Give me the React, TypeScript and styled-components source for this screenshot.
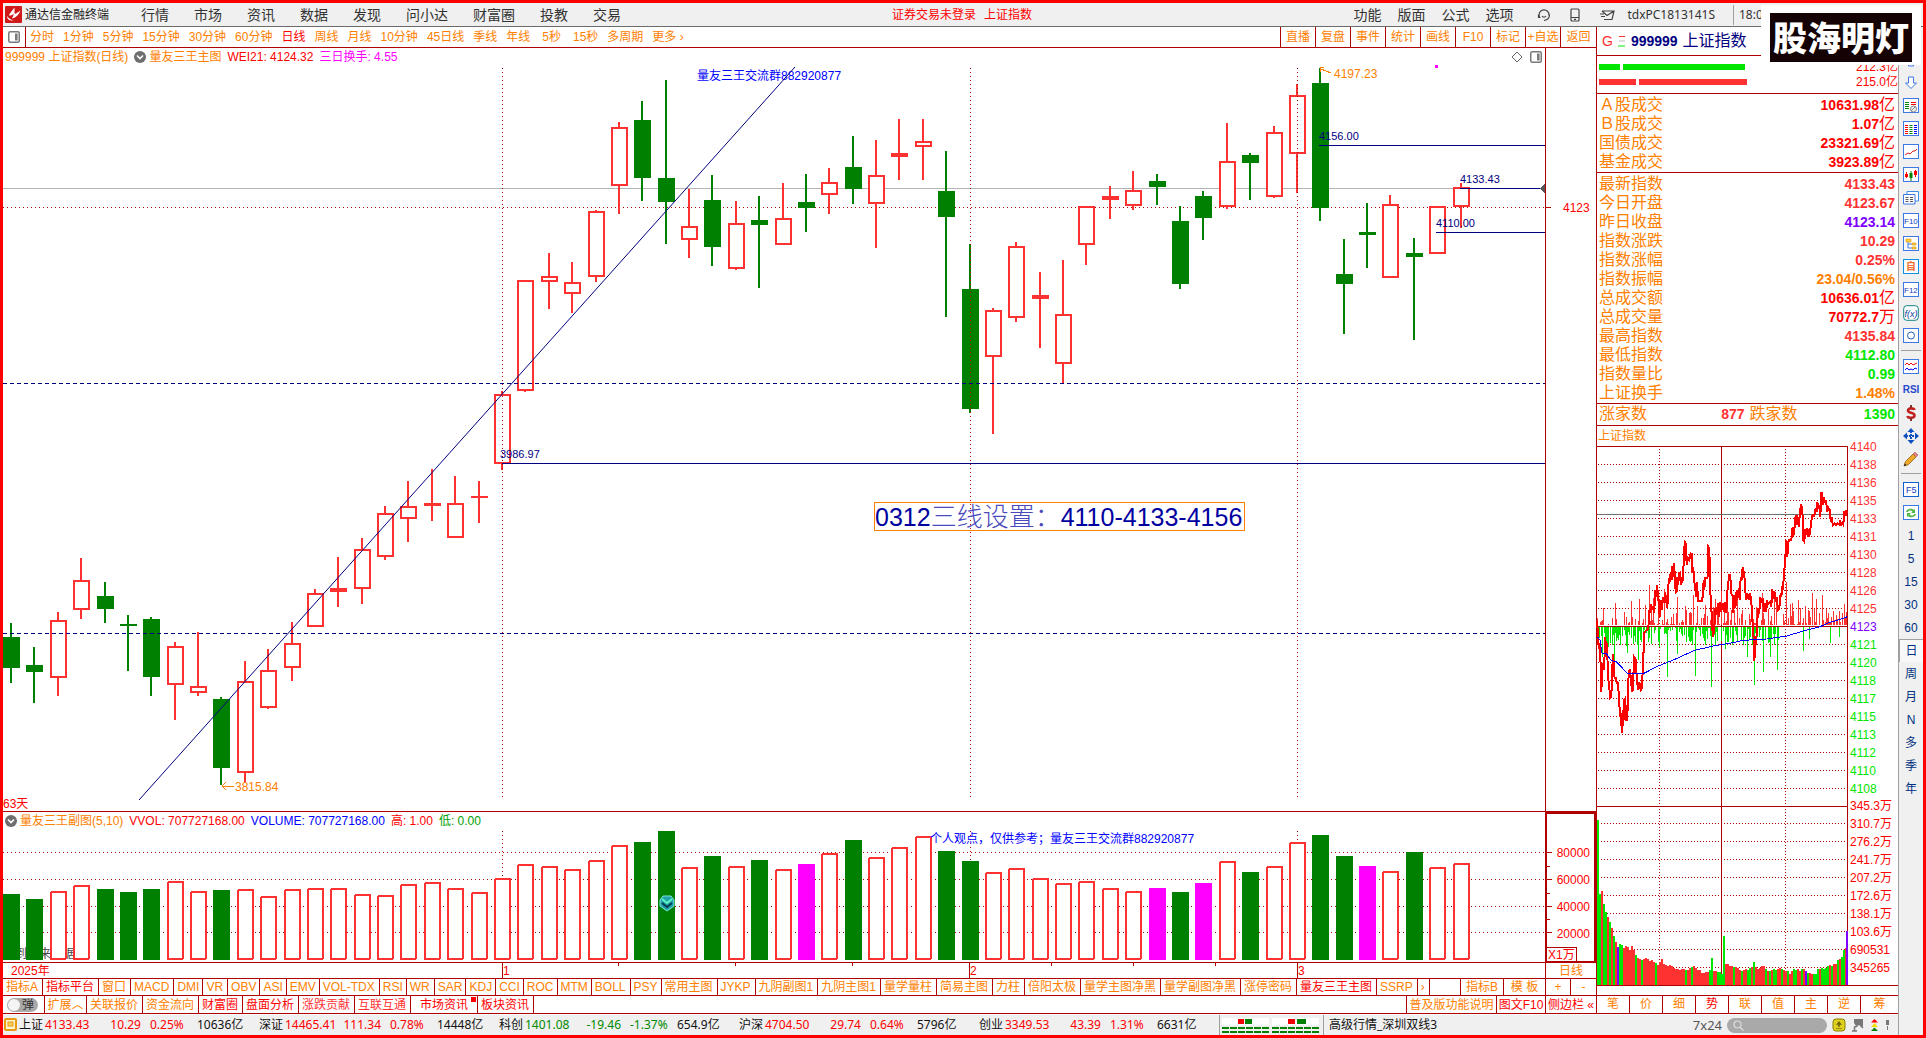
import React from "react";
import styled, { createGlobalStyle, css } from "styled-components";

const C = {
  frame: "#ff0000",
  line: "#b00000",
  orange: "#ff8000",
  red: "#ff0000",
  up: "#ff3232",
  down: "#008000",
  lime: "#00e600",
  purple: "#8000ff",
  navy: "#000080",
  blue: "#0000ff",
  magenta: "#ff00ff",
  bar: "#f0f0f0",
};
const SANS = `"Liberation Sans", "Noto Sans CJK SC", sans-serif`;
const UI = `"Noto Sans", "Noto Sans CJK SC", sans-serif`;

const Global = createGlobalStyle`
  * { box-sizing: border-box; }
  body { margin: 0; background: #fff; font: 12px/16px ${SANS}; }
  button { margin: 0; padding: 0; border: 0; background: none; font: inherit; color: inherit; white-space: nowrap; cursor: pointer; }
  svg { display: block; }
  svg text { font-family: ${SANS}; font-size: 12px; }
`;

const Frame = styled.div`
  display: flex;
  flex-direction: column;
  height: 100vh;
  min-height: 800px;
  border: 3px solid ${C.frame};
  overflow: hidden;
`;

/* ---------- top menu ---------- */
const MenuBar = styled.header`
  position: relative;
  display: flex;
  align-items: center;
  flex: none;
  height: 24px;
  padding-left: 2px;
  background: ${C.bar};
  border-bottom: 1px solid #6b6b6b;
  color: #333;
  font-family: ${UI};
`;
const AppTitle = styled.h1`
  margin: 0 32px 0 3px;
  width: 84px;
  font: 12px/22px ${UI};
  color: #222;
  white-space: nowrap;
`;
const MenuGroup = styled.nav<{ $gap: number }>`
  display: flex;
  gap: ${(p) => p.$gap}px;
  font-size: 14px;
  line-height: 22px;
`;
const LoginNote = styled.div`
  display: flex;
  gap: 8px;
  margin-left: 271px;
  color: ${C.red};
`;
const MenuRight = styled.div`
  display: flex;
  align-items: center;
  margin-left: auto;
`;
const MenuIcons = styled.div`
  display: flex;
  align-items: center;
  gap: 18px;
  margin: 0 12px 0 24px;
`;
const Clock = styled.div`
  width: 190px;
  margin-left: 18px;
  padding-left: 5px;
  border-left: 1px solid #a0a0a0;
  line-height: 20px;
`;
const Brand = styled.div`
  position: absolute;
  top: 2px;
  right: 2px;
  z-index: 5;
  padding: 8px 9px 3px;
  background: #fff;
`;
const BrandText = styled.div`
  width: 142px;
  height: 49px;
  background: #140204;
  color: #fff;
  font: 900 34px/48px "Noto Sans CJK SC", sans-serif;
  text-align: center;
  white-space: nowrap;
`;

/* ---------- shell ---------- */
const Body = styled.div`
  display: flex;
  flex: 1;
  min-height: 0;
`;
const Main = styled.div`
  display: flex;
  flex-direction: column;
  flex: 1;
  min-width: 0;
`;
const Work = styled.div`
  display: flex;
  flex: 1;
  min-height: 0;
`;
const Left = styled.main`
  display: flex;
  flex-direction: column;
  flex: 1;
  min-width: 0;
`;

const PeriodBar = styled.div`
  display: flex;
  flex: none;
  height: 21px;
  border-bottom: 1px solid ${C.line};
  color: ${C.orange};
`;
const PanelToggle = styled.button`
  display: flex;
  align-items: center;
  width: 23px;
  padding-left: 5px;
  border-right: 1px solid ${C.line};
`;
const Periods = styled.div`
  display: flex;
  align-items: center;
  gap: 9px;
  padding-left: 4px;
`;
const Period = styled.button<{ $on?: boolean; $inset?: boolean }>`
  line-height: 18px;
  ${(p) => p.$on && css`color: ${C.red};`}
  ${(p) => p.$inset && css`padding-left: 3px;`}
`;
const Tools = styled.div`
  display: flex;
  margin-left: auto;
`;
const Tool = styled.button`
  width: 35px;
  border-left: 1px solid ${C.line};
  line-height: 18px;
  &:last-child { width: 36px; }
`;

const Pane = styled.section<{ $h?: number }>`
  display: flex;
  ${(p) => (p.$h ? css`flex: none; height: ${p.$h}px;` : css`flex: 1; min-height: 0;`)}
  border-bottom: 1px solid ${C.line};
`;
const Plot = styled.div`
  display: flex;
  flex-direction: column;
  flex: 1;
  min-width: 0;
`;
const Info = styled.div<{ $h: number }>`
  display: flex;
  flex: none;
  align-items: center;
  gap: 6px;
  height: ${(p) => p.$h}px;
  padding: 0 3px 0 2px;
  white-space: nowrap;
  > svg { margin-right: -3px; }
`;
const InfoTools = styled.div`
  display: flex;
  gap: 7px;
  margin-left: auto;
`;
const Ink = styled.span<{ $c: string }>`
  color: ${(p) => p.$c};
`;
const Canvas = styled.svg`
  flex: 1;
  width: 100%;
  min-width: 0;
  min-height: 0;
  overflow: visible;
`;
const Axis = styled.div<{ $box?: boolean }>`
  display: flex;
  flex: none;
  width: 51px;
  border-left: 1px solid ${C.line};
  ${(p) => p.$box && css`border: 2px solid ${C.line}; border-bottom-width: 1px;`}
`;
const DateRow = styled.div`
  display: flex;
  flex: none;
  height: 16px;
  border-bottom: 1px solid ${C.line};
`;
const DateCell = styled.button`
  flex: none;
  width: 51px;
  border-left: 1px solid ${C.line};
  color: ${C.orange};
  line-height: 14px;
`;

const TabRow = styled.div<{ $h: number }>`
  display: flex;
  flex: none;
  height: ${(p) => p.$h}px;
  border-bottom: 1px solid ${C.line};
  overflow: hidden;
`;
const Tab = styled.button<{ $c?: string; $w?: number; $wide?: boolean; $tight?: boolean }>`
  position: relative;
  flex: none;
  padding: ${(p) => (p.$wide ? "0 9px" : p.$tight ? "0 3px" : "0 4px 0 3px")};
  ${(p) => p.$w && css`width: ${p.$w}px; padding: 0;`}
  border-right: 1px solid ${C.line};
  color: ${(p) => p.$c || C.orange};
  line-height: 16px;
  &:last-child { border-right: 0; }
`;
const Spacer = styled.div`
  flex: 1;
  border-right: 1px solid ${C.line};
`;
const NewMark = styled.i`
  position: absolute;
  top: 1px;
  right: 1px;
  width: 5px;
  height: 5px;
  background: ${C.red};
`;
const Switch = styled.label`
  display: flex;
  align-items: center;
  flex: none;
  width: 42px;
  padding-left: 4px;
  border-right: 1px solid ${C.line};
`;
const SwitchBox = styled.input`
  position: absolute;
  opacity: 0;
`;
const SwitchPill = styled.span`
  display: flex;
  align-items: center;
  justify-content: space-between;
  width: 31px;
  height: 14px;
  padding: 0 4px 0 1px;
  border-radius: 7px;
  background: #a9a9a9;
  color: #333;
  line-height: 14px;
  &::before {
    content: "";
    width: 12px;
    height: 12px;
    border-radius: 50%;
    background: #f4f4f4;
  }
`;

/* ---------- status bar ---------- */
const StatusBar = styled.footer`
  display: flex;
  align-items: center;
  flex: none;
  height: 21px;
  padding-left: 1px;
  background: ${C.bar};
  border-top: 1px solid #fafafa;
  font-family: ${UI};
  color: #111;
  white-space: nowrap;
`;
const Quote = styled.div<{ $c: string }>`
  display: grid;
  flex: none;
  grid-template-columns: 26px 54px 42px 47px 71px;
  color: ${(p) => p.$c};
  line-height: 20px;
`;
const QuoteText = styled.span<{ $indent?: boolean; $end?: boolean; $dark?: boolean }>`
  ${(p) => p.$end && css`text-align: right;`}
  ${(p) => p.$indent && css`padding-left: 9px;`}
  ${(p) => p.$dark && css`color: #111;`}
`;
const Server = styled.div`
  display: flex;
  align-items: center;
  gap: 5px;
  height: 20px;
`;
const Blocks = styled.div`
  padding: 0 2px;
  border: solid #a0a0a0;
  border-width: 0 1px;
`;
const StatusRight = styled.div`
  display: flex;
  align-items: center;
  gap: 5px;
  margin-left: auto;
  padding-right: 7px;
  font-size: 13px;
  color: #555;
`;
const Search = styled.label`
  display: flex;
  align-items: center;
  width: 100px;
  height: 15px;
  padding-left: 6px;
  border-radius: 8px;
  background: #a9a9a9;
  input { width: 76px; height: 13px; border: 0; padding: 0; background: none; outline: none; }
`;

/* ---------- right quote panel ---------- */
const Panel = styled.aside`
  display: flex;
  flex-direction: column;
  flex: none;
  width: 302px;
  border-left: 1px solid ${C.line};
`;
const PanelHead = styled.h2`
  display: flex;
  align-items: center;
  flex: none;
  gap: 5px;
  height: 29px;
  margin: 0;
  padding-left: 5px;
  border-bottom: 1px solid ${C.line};
  font: 16px/26px ${SANS};
  color: ${C.navy};
  b { font-size: 14px; }
  i { font-style: normal; color: ${C.up}; font-size: 14px; }
`;
const Flow = styled.div`
  flex: none;
  height: 38px;
  padding: 3px 0 0 2px;
  border-bottom: 1px solid ${C.line};
`;
const FlowRow = styled.div<{ $c: string }>`
  display: flex;
  align-items: center;
  gap: 3px;
  height: 15px;
  color: ${C.red};
  i { height: 6px; background: ${(p) => p.$c}; }
  span { margin-left: auto; }
`;
const Stats = styled.table`
  flex: none;
  width: 100%;
  border-spacing: 0;
  padding: 1px 3px 1px 2px;
  border-bottom: 1px solid ${C.line};
  tr { height: 19px; }
  th, td { height: 19px; padding: 0; line-height: 16px; font-size: 16px; vertical-align: middle; }
  th { font-weight: 400; text-align: left; color: ${C.orange}; }
  td { text-align: right; }
  b { font-size: 14px; line-height: 14px; }
`;
const Breadth = styled.div`
  display: grid;
  grid-template-columns: 1fr 1fr;
  flex: none;
  height: 22px;
  gap: 5px;
  padding: 0 3px 0 2px;
  border-bottom: 1px solid ${C.line};
  font-size: 16px;
  line-height: 20px;
  color: ${C.orange};
  div { display: flex; justify-content: space-between; }
  b { font-size: 14px; }
`;
const MiniTitle = styled.div`
  flex: none;
  height: 20px;
  padding-left: 1px;
  color: ${C.orange};
  line-height: 20px;
`;
const MiniTabs = styled.div`
  display: flex;
  flex: none;
  height: 19px;
  border: solid ${C.line};
  border-width: 1px 0;
`;
const MiniTab = styled.button<{ $on?: boolean }>`
  width: 33px;
  border-right: 1px solid ${C.line};
  color: ${(p) => (p.$on ? C.red : C.orange)};
  line-height: 17px;
  &:last-child { flex: 1; border-right: 0; }
`;

/* ---------- side tool strip ---------- */
const Strip = styled.nav`
  display: flex;
  flex-direction: column;
  flex: none;
  width: 25px;
  padding-top: 21px;
  background: ${C.bar};
  border-left: 1px solid #a0a0a0;
`;
const StripItem = styled.button<{ $on?: boolean; $small?: boolean }>`
  display: flex;
  align-items: center;
  justify-content: center;
  flex: none;
  height: 23px;
  color: #003080;
  ${(p) => p.$on && css`border: 1px solid #a0a0a0; border-width: 1px 0 0 1px; background: #f8f8f8;`}
  ${(p) => p.$small && css`font-weight: 700; font-size: 10px; color: #2848d0;`}
`;
const StripRule = styled.hr`
  flex: none;
  align-self: stretch;
  height: 1px;
  margin: 3px 2px 4px;
  border: 0;
  background: #a0a0a0;
`;

/* ---------- data ---------- */
// kind, high, body top, body bottom, low, volume top
type Candle = [string, number, number, number, number, number];
const candles: Candle[] = [
  ["g", 623, 637, 668, 683, 894], ["g", 647, 665, 672, 703, 899], ["r", 612, 620, 678, 696, 891],
  ["r", 558, 580, 610, 619, 885], ["g", 582, 596, 609, 623, 889], ["g", 615, 624, 626, 671, 892],
  ["g", 617, 619, 677, 696, 889], ["r", 642, 646, 685, 720, 881], ["r", 632, 686, 693, 696, 891],
  ["g", 697, 699, 768, 785, 890], ["r", 661, 681, 773, 783, 889], ["r", 649, 670, 708, 709, 896],
  ["r", 622, 643, 668, 681, 889], ["r", 589, 593, 627, 627, 888], ["r", 557, 588, 592, 607, 888],
  ["r", 538, 549, 589, 604, 894], ["r", 506, 513, 557, 560, 895], ["r", 481, 506, 519, 542, 884],
  ["r", 469, 503, 506, 521, 882], ["r", 476, 503, 538, 538, 888], ["r", 481, 496, 498, 523, 892],
  ["r", 391, 394, 464, 470, 878], ["r", 280, 280, 391, 392, 864], ["r", 253, 276, 282, 309, 866],
  ["r", 262, 282, 294, 313, 869], ["r", 210, 211, 277, 282, 860], ["r", 122, 127, 186, 214, 845],
  ["g", 101, 120, 178, 201, 842], ["g", 80, 178, 202, 244, 831], ["r", 189, 226, 240, 258, 867],
  ["g", 175, 200, 247, 266, 856], ["r", 201, 223, 269, 270, 866], ["g", 196, 220, 225, 288, 860],
  ["r", 183, 218, 245, 245, 869], ["g", 174, 202, 208, 232, 864], ["r", 168, 182, 195, 214, 853],
  ["g", 136, 167, 189, 204, 840], ["r", 140, 175, 204, 248, 857], ["r", 119, 153, 157, 180, 847],
  ["r", 119, 141, 147, 180, 836], ["g", 151, 191, 217, 317, 851], ["g", 244, 289, 409, 413, 861],
  ["r", 308, 310, 357, 434, 872], ["r", 242, 246, 318, 322, 868], ["r", 272, 295, 299, 348, 878],
  ["r", 260, 314, 364, 383, 883], ["r", 206, 206, 245, 265, 881], ["r", 186, 196, 200, 219, 888],
  ["r", 171, 190, 206, 210, 891], ["g", 174, 181, 187, 205, 888], ["g", 206, 221, 284, 289, 892],
  ["g", 191, 196, 218, 240, 883], ["r", 123, 161, 207, 209, 861], ["g", 153, 155, 163, 200, 872],
  ["r", 126, 132, 197, 198, 866], ["r", 84, 95, 154, 193, 842], ["g", 68, 83, 208, 221, 835],
  ["g", 239, 274, 284, 334, 856], ["g", 203, 232, 235, 268, 866], ["r", 195, 204, 278, 278, 871],
  ["g", 238, 253, 257, 340, 852], ["r", 206, 206, 254, 254, 867], ["r", 183, 187, 207, 228, 863],
];
const magentaBars = new Set([34, 49, 51, 58]);
const cx = (i: number) => Math.round(11 + i * 23.38);
const monthLines = [502, 970, 1297];

const PriceChart = () => (
  <Canvas viewBox="3 66 1542 745" preserveAspectRatio="none" shapeRendering="crispEdges">
    <path d="M3 188.5H1545" stroke="#b4b4b4" />
    <path d="M3 207.5H1545" stroke={C.line} strokeDasharray="1 3" />
    <text x="697" y="80" fill={C.blue}>量友三王交流群882920877</text>
    {candles.map(([k, h, t, b, l], i) => {
      const x = cx(i);
      const c = k === "g" ? C.down : C.up;
      const solid = k === "g" || b - t < 5;
      return (
        <g key={i}>
          <rect x={x - 1} y={h} width="2" height={t - h} fill={c} />
          <rect x={x - 1} y={b} width="2" height={l - b} fill={c} />
          {solid ? (
            <rect x={x - 8} y={t} width="17" height={b - t} fill={c} />
          ) : (
            <rect x={x - 7} y={t + 1} width="15" height={b - t - 2} fill="#fff" stroke={c} strokeWidth="2" />
          )}
        </g>
      );
    })}
    {monthLines.map((x) => (
      <path key={x} d={`M${x + 0.5} 68V797`} stroke={C.line} strokeDasharray="1 3" />
    ))}
    <path d="M3 383.5H1545M3 633.5H1545" stroke={C.navy} strokeDasharray="4 3" />
    <path d="M139 800L795 67" stroke={C.navy} shapeRendering="auto" />
    <path d="M502 463.5H1545M1319 145.5H1545M1460 188.5H1545M1436 232.5H1545" stroke={C.navy} />
    <g fill={C.navy}>
      <text x="500" y="458" style={{ fontSize: 11 }}>3986.97</text>
      <text x="1319" y="140" style={{ fontSize: 11 }}>4156.00</text>
      <text x="1460" y="183" style={{ fontSize: 11 }}>4133.43</text>
      <text x="1436" y="227" style={{ fontSize: 11 }}>4110.00</text>
    </g>
    <g fill={C.orange}>
      <text x="1334" y="78">4197.23</text>
      <text x="235" y="791">3815.84</text>
    </g>
    <path d="M1321 69L1331 73M1324 67H1320V72M222 786H234M226 782L222 786L226 790" stroke={C.orange} fill="none" />
    <path d="M1545 184L1540 188.5L1545 193Z" fill="#555" />
    <rect x="1435" y="65" width="3" height="3" fill={C.magenta} />
    <rect x="874.5" y="502.5" width="370" height="28" fill="none" stroke={C.orange} />
    <text x="875" y="526" fill="#0000a0" style={{ fontSize: 25 }}>
      0312<tspan fill="#4a4abb" style={{ fontWeight: 300, fontSize: 26 }}>三线设置：</tspan>4110-4133-4156
    </text>
    <text x="3" y="808" fill={C.red}>63天</text>
  </Canvas>
);

const VolumeChart = () => (
  <Canvas viewBox="3 829 1542 133" preserveAspectRatio="none" shapeRendering="crispEdges">
    <path d="M3 852.5H1545M3 879.5H1545M3 906.5H1545M3 932.5H1545" stroke={C.line} strokeDasharray="1 3" />
    {monthLines.map((x) => (
      <path key={x} d={`M${x + 0.5} 831V960`} stroke={C.line} strokeDasharray="1 3" />
    ))}
    <text x="3" y="958" fill="#444">用到未来数据</text>
    {candles.map((d, i) => {
      const x = cx(i);
      const v = d[5];
      const fill = magentaBars.has(i) ? C.magenta : d[0] === "g" ? C.down : "";
      return fill ? (
        <rect key={i} x={x - 8} y={v} width="17" height={960 - v} fill={fill} />
      ) : (
        <rect key={i} x={x - 7} y={v + 1} width="15" height={958 - v} rx="1" fill="#fff" stroke={C.up} strokeWidth="2" />
      );
    })}
    <text x="930" y="843" fill={C.blue}>个人观点，仅供参考；量友三王交流群882920877</text>
    <g shapeRendering="auto">
      <path d="M663 896H671L674 900V906L667 911L660 906V900Z" fill="#1fa3a8" stroke="#7fe4e0" />
      <path d="M662 899L667 903L672 899" fill="none" stroke="#5ff0c0" strokeWidth="2" />
      <path d="M662 903L667 907L672 903" fill="none" stroke="#063c50" strokeWidth="2" />
    </g>
  </Canvas>
);

/* intraday series, in thirds of a pixel from (1590, 430) */
const intraday =
  "22,573 24,640 28,655 30,640 34,785 38,700 42,720 46,620 48,660 51,640 54,740 58,770 60,805 64,800 66,740 68,690 70,672 72,730 74,745 78,745 80,758 84,760 88,820 90,860 93,850 94,880 97,910 99,840 101,870 103,810 106,805 108,870 112,870 114,780 116,730 119,717 122,740 126,785 128,780 130,740 133,682 137,690 140,740 144,780 148,755 152,780 156,775 158,720 160,690 162,615 164,605 170,600 175,595 178,540 180,548 183,522 186,540 188,530 193,548 195,480 198,500 202,465 204,510 206,510 209,560 212,510 216,540 218,500 221,520 225,488 228,500 231,535 234,508 236,445 239,455 242,425 245,450 247,408 249,440 251,400 254,430 257,488 260,485 262,440 265,465 267,430 270,428 274,460 278,450 281,400 284,336 287,340 290,405 294,385 298,390 302,370 305,372 307,430 310,410 312,450 316,470 318,500 320,455 323,490 325,513 335,512 338,500 341,450 343,480 346,445 350,445 353,440 355,350 358,355 360,440 362,515 364,525 366,590 370,620 374,575 376,535 379,555 384,520 386,560 390,515 394,545 398,520 402,545 406,515 409,548 413,470 416,450 418,432 421,440 424,490 428,500 430,548 433,495 436,535 440,480 442,510 446,475 449,510 452,440 455,450 458,410 461,425 464,450 468,510 472,490 476,510 480,490 484,512 487,570 490,600 493,692 496,650 499,630 502,570 505,540 508,545 511,500 514,515 518,510 522,545 526,518 528,545 532,515 536,520 540,515 544,530 547,478 550,500 554,490 558,515 560,500 564,540 568,535 572,490 574,500 577,475 579,480 582,430 585,400 589,330 592,380 595,335 598,330 604,330 608,290 610,318 614,290 617,255 620,285 622,255 626,290 630,250 633,222 637,235 640,330 643,335 646,300 650,298 653,320 656,298 658,320 662,290 665,265 668,255 673,258 677,235 680,245 682,215 685,238 688,225 691,260 694,190 697,190 699,225 702,200 705,220 708,210 712,245 716,235 719,240 722,275 726,262 728,285 733,280 738,286 742,280 748,284 750,270 754,284 757,278 760,284 763,243 767,258 769,240 772,250";
const average =
  "22,620 30,630 36,670 50,672 64,692 78,695 95,712 112,730 158,732 200,710 250,690 314,661 370,648 430,638 460,631 530,627 590,618 640,603 690,590 720,577 745,570 772,560";
const toPage = (s: string) =>
  s.split(" ").map((p) => {
    const [x, y] = p.split(",").map(Number);
    return `${(1590 + x / 3).toFixed(1)},${(430 + y / 3).toFixed(1)}`;
  }).join(" ");
const hash = (n: number) => {
  const v = Math.sin(n * 12.9898) * 43758.5453;
  return v - Math.floor(v);
};
const upSpikes: Record<number, number> = { 6: 17, 18: 22, 27: 13, 34: 24, 42: 26, 48: 20, 52: 40, 56: 27, 67: 36, 80: 28, 96: 30, 118: 26, 124: 34, 130: 44, 140: 28, 165: 32, 177: 29, 189: 43, 195: 22, 201: 25, 208: 19, 215: 32, 219: 26, 225: 30, 236: 14, 242: 14, 247: 21 };
const downSpikes: Record<number, number> = { 5: 30, 11: 20, 17: 34, 23: 18, 30: 26, 41: 33, 62: 20, 70: 50, 80: 27, 98: 49, 114: 60, 128: 22, 135: 18, 150: 30, 157: 58, 166: 45, 173: 30, 180: 43, 206: 24, 212: 12, 233: 16, 242: 10 };
const volumeShape: [number, number][] = [
  [22, 95], [25, 240], [28, 310], [31, 291], [36, 315], [42, 355], [50, 378], [60, 400], [66, 427], [75, 455], [84, 470], [90, 455], [96, 475], [108, 462], [116, 478], [126, 468], [136, 495], [150, 508], [170, 508], [190, 518], [206, 522], [212, 500], [218, 522], [230, 528], [240, 518], [250, 535], [290, 540], [308, 530], [320, 540], [340, 548], [358, 540], [364, 505], [370, 545], [394, 550], [397, 441], [401, 441], [404, 525], [420, 528], [440, 535], [455, 545], [480, 535], [490, 518], [497, 538], [520, 530], [530, 545], [560, 535], [590, 540], [600, 552], [610, 540], [640, 540], [660, 550], [674, 550], [684, 535], [700, 540], [712, 528], [735, 520], [745, 510], [755, 495], [762, 478], [767, 478],
];
const volumeAt = (x: number) => {
  for (let i = 1; i < volumeShape.length; i++) {
    const [x0, y0] = volumeShape[i - 1];
    const [x1, y1] = volumeShape[i];
    if (x <= x1) return y0 + ((y1 - y0) * (x - x0)) / (x1 - x0);
  }
  return 580;
};
const priceMarks = [4140, 4138, 4136, 4135, 4133, 4131, 4130, 4128, 4126, 4125, 4123, 4121, 4120, 4118, 4117, 4115, 4113, 4112, 4110, 4108];
const volMarks = ["345.3万", "310.7万", "276.2万", "241.7万", "207.2万", "172.6万", "138.1万", "103.6万", "690531", "345265"];

const MiniChart = () => (
  <Canvas viewBox="1597 446 301 549" preserveAspectRatio="none" shapeRendering="crispEdges">
    {priceMarks.map((_, i) => i > 0 && i !== 10 && (
      <path key={i} d={`M1598 ${446.5 + i * 18}H1847`} stroke={C.line} strokeDasharray="1 2" />
    ))}
    {volMarks.map((_, i) => i > 0 && (
      <path key={i} d={`M1598 ${805.5 + i * 18}H1847`} stroke={C.line} strokeDasharray="1 2" />
    ))}
    <path d="M1659.5 449V985M1785.5 449V985" stroke={C.line} strokeDasharray="1 2" />
    <path d="M1597 446.5H1847.5V985M1721.5 446V985M1597 626.5H1847M1597 806.5H1847M1597 985.5H1898" stroke={C.line} fill="none" />
    <path d="M1597 514.5H1847" stroke="#707070" />
    {Array.from({ length: 250 }, (_, i) => {
      const n = hash(i + 1);
      const x = 1597 + i;
      const up = upSpikes[i] || (i > 45 && hash(i + 400) > 0.45 ? n * n * 22 : hash(i + 90) > 0.7 ? n * 8 : 0);
      const dip = downSpikes[i] || (i < 185 && hash(i + 700) > 0.35 ? n * 19 : 0);
      return (
        <g key={i}>
          {up > 0 && <rect x={x} y={625 - Math.round(up)} width="1" height={Math.round(up)} fill={C.up} />}
          {dip > 0 && <rect x={x} y={627} width="1" height={Math.round(dip)} fill={C.lime} />}
        </g>
      );
    })}
    {Array.from({ length: 125 }, (_, i) => {
      const px = 22 + i * 6;
      const top = 790 + Math.round((volumeAt(px) + (hash(i) - 0.5) * 8) / 3);
      const c = i === 10 || i === 104 ? C.purple : hash(i + 33) > 0.6 || i < 2 || i === 63 ? C.lime : C.up;
      return <rect key={i} x={1597 + i * 2} y={top} width="2" height={985 - top} fill={c} />;
    })}
    <rect x="1846" y="931" width="2" height="54" fill={C.purple} />
    <polyline points={toPage(intraday)} fill="none" stroke={C.red} strokeWidth="2" />
    <polyline points={toPage(average)} fill="none" stroke={C.blue} />
    {priceMarks.map((v, i) => (
      <text key={v} x="1850" y={451 + i * 18} fill={i < 10 ? C.up : i === 10 ? C.purple : C.lime}>{v}</text>
    ))}
    {volMarks.map((v, i) => (
      <text key={v} x="1850" y={810 + i * 18} fill={C.red}>{v}</text>
    ))}
  </Canvas>
);

/* ---------- small drawings ---------- */
const Disc = () => (
  <svg width="12" height="12" viewBox="0 0 12 12">
    <circle cx="6" cy="6" r="6" fill="#6e6e6e" />
    <path d="M3 4.5L6 7.5L9 4.5" fill="none" stroke="#fff" strokeWidth="1.6" />
  </svg>
);
const SplitIcon = () => (
  <svg width="12" height="12" viewBox="0 0 12 12">
    <rect x=".75" y=".75" width="10.5" height="10.5" rx="1.5" fill="#fff" stroke="#7a7a7a" strokeWidth="1.5" />
    <rect x="7" y="2.5" width="2.6" height="7" fill="#7a7a7a" />
  </svg>
);
const Boxed = ({ children, color = "#3c78e6" }: { children?: React.ReactNode; color?: string }) => (
  <svg width="16" height="16" viewBox="0 0 16 16">
    <rect x=".5" y=".5" width="15" height="14" fill="#fff" stroke={color} />
    {children}
  </svg>
);
const boxText = { fontSize: 9 };
const bars = (x: number, c: string) => <path d={`M${x} 4.5h3M${x} 6.5h3M${x} 8.5h3M${x} 10.5h3M${x} 12.5h3`} stroke={c} />;
const arrowDown = "M4.5 2h5v6h3L7 13.500L1.500 8h3z";
const strip: { id: string; art?: React.ReactNode; text?: string; on?: boolean; small?: boolean; rule?: boolean }[] = [
  { id: "上翻", art: <svg width="14" height="16" viewBox="0 0 14 16"><path d={arrowDown} transform="rotate(180 7 8)" fill="#fff" stroke="#3c78e6" /></svg> },
  { id: "下翻", art: <svg width="14" height="16" viewBox="0 0 14 16"><path d={arrowDown} fill="#fff" stroke="#3c78e6" /></svg> },
  { id: "报价", art: <Boxed><path d="M2 4.5h4M2 6.500h4M2 8.500h4M2 10.500h4" stroke="green" /><path d="M8 4.500h5M8 6.500h5" stroke="red" /><circle cx="10.500" cy="11" r="3" fill="#eee" stroke="#888" /><path d="M8 13l5-5" stroke="#888" /></Boxed> },
  { id: "列表", art: <Boxed>{bars(2, "red")}{bars(6.5, "green")}{bars(11, "blue")}</Boxed> },
  { id: "走势", art: <Boxed><path d="M2 11l3-2 2 1 3-3 2 0 2-2" fill="none" stroke="#d02020" /></Boxed> },
  { id: "K线", art: <Boxed><path d="M3.500 5v6M12.500 3v7" stroke="red" /><path d="M8 4v10" stroke="green" /><path d="M2 7h3v3H2zM11 4h3v4h-3z" fill="red" /><path d="M6.500 6h3v5h-3z" fill="green" /></Boxed> },
  { id: "多窗", art: <svg width="16" height="16" viewBox="0 0 16 16"><path d="M4 1.500h11.500V11H4z" fill="#fff" stroke="#3c8ce6" /><path d="M.5 4.500H12V14H.5z" fill="#fff" stroke="#3c78e6" /><path d="M2.500 7.500h3M2.500 9.500h3M2.500 11.500h3M7 7.500h3M7 9.500h3M7 11.500h3" stroke="#555" /></svg> },
  { id: "F10", art: <Boxed><text x="1" y="11" fill="#1040c0" style={{ fontSize: 8 }}>F10</text></Boxed> },
  { id: "结构", art: <Boxed><path d="M5 6v6h4M5 8h4" stroke="#3c78e6" fill="none" /><path d="M3 3h5v3H3zM9 7h4v2H9zM9 11h4v2H9z" fill="#ffd040" stroke="#d09000" strokeWidth=".6" /></Boxed> },
  { id: "自选", art: <Boxed color="#1090e0"><text x="3" y="11" fill="#f07030" style={{ fontSize: 10, fontWeight: 700 }}>自</text></Boxed> },
  { id: "F12", art: <Boxed><text x="1" y="11" fill="#1040c0" style={{ fontSize: 8 }}>F12</text></Boxed> },
  { id: "公式", art: <svg width="16" height="16" viewBox="0 0 16 16"><rect x=".7" y=".7" width="14.600" height="14.600" rx="3" fill="#fff" stroke="#108080" /><text x="1.500" y="12" fill="#1040a0" style={{ fontSize: 9, fontStyle: "italic" }}>f(x)</text></svg> },
  { id: "圆", art: <Boxed><circle cx="8" cy="7.500" r="3.500" fill="none" stroke="#2060c0" /></Boxed> },
  { id: "r1", rule: true },
  { id: "叠加", art: <Boxed><path d="M2 6l2-2 2 2 2-2 2 2 2-1 2-1" fill="none" stroke="red" /><path d="M2 11l2-2 2 2 2-1 2 1 2-2 2 1" fill="none" stroke="blue" /></Boxed> },
  { id: "RSI", text: "RSI", small: true },
  { id: "资金", art: <svg width="14" height="16" viewBox="0 0 14 16"><path d="M10.500 5C10 3 4 2.500 4 5.500C4 8.500 10.500 7 10.500 10.500C10.500 13.500 4 13.500 3.500 11" fill="none" stroke="#c02020" strokeWidth="2.600" /><path d="M7 0v3M7 13v3" stroke="#803030" strokeWidth="2" /></svg> },
  { id: "移动", art: <svg width="16" height="16" viewBox="0 0 16 16"><path d="M8 0l3.500 4h-7zM8 16l3.500-4h-7zM0 8l4-3.500v7zM16 8l-4-3.500v7z" fill="#1050c0" /><path d="M8 3v10M3 8h10" stroke="#1050c0" strokeWidth="2" strokeDasharray="2 1" /></svg> },
  { id: "画笔", art: <svg width="16" height="16" viewBox="0 0 16 16"><path d="M1 15l1.500-4.500L10 3l3 3-7.500 7.500z" fill="#f0a828" stroke="#906010" strokeWidth=".8" /><path d="M10 3l2-2 3 3-2 2z" fill="#e88080" stroke="#a06060" strokeWidth=".6" /><path d="M1 15l.8-2.500 1.700 1.700z" fill="#222" /></svg> },
  { id: "r2", rule: true },
  { id: "F5", art: <Boxed color="#1060d0"><text x="3" y="11" fill="#1040c0" style={boxText}>F5</text></Boxed> },
  { id: "刷新", art: <Boxed><path d="M3 7c1-4 6-4 8-2l1-1v4H8l1.500-1.500C8 5 5.500 5 5 7zM13 9c-1 4-6 4-8 2l-1 1V8h4L6.500 9.500C8 11 10.500 11 11 9z" fill="#50b848" /></Boxed> },
  ...["1", "5", "15", "30", "60", "日", "周", "月", "N", "多", "季", "年"].map((t) => ({ id: t, text: t, on: t === "日" })),
];

const periods = ["分时", "1分钟", "5分钟", "15分钟", "30分钟", "60分钟", "日线", "周线", "月线", "10分钟", "45日线", "季线", "年线", "5秒", "15秒", "多周期", "更多 ›"];
const indicators = ["指标A", "指标平台", "窗口", "MACD", "DMI", "VR", "OBV", "ASI", "EMV", "VOL-TDX", "RSI", "WR", "SAR", "KDJ", "CCI", "ROC", "MTM", "BOLL", "PSY", "常用主图", "JYKP", "九阴副图1", "九阴主图1", "量学量柱", "简易主图", "力柱", "倍阳太极", "量学主图净黑", "量学副图净黑", "涨停密码", "量友三王主图", "SSRP", "›"];
const hot = new Set(["指标平台", "量友三王主图"]);

const turnover = [["Ａ股成交", "10631.98"], ["Ｂ股成交", "1.07"], ["国债成交", "23321.69"], ["基金成交", "3923.89"]];
const stats: [string, string, string, string?][] = [
  ["最新指数", "4133.43", C.up], ["今日开盘", "4123.67", C.up], ["昨日收盘", "4123.14", C.purple], ["指数涨跌", "10.29", C.up],
  ["指数涨幅", "0.25%", C.up], ["指数振幅", "23.04/0.56%", C.orange], ["总成交额", "10636.01", C.red, "亿"], ["总成交量", "70772.7", C.red, "万"],
  ["最高指数", "4135.84", C.up], ["最低指数", "4112.80", C.lime], ["指数量比", "0.99", C.lime], ["上证换手", "1.48%", C.orange],
];
const quotes = [
  ["上证", "4133.43", "10.29", "0.25%", "10636亿"], ["深证", "14465.41", "111.34", "0.78%", "14448亿"], ["科创", "1401.08", "-19.46", "-1.37%", "654.9亿"],
  ["沪深", "4704.50", "29.74", "0.64%", "5796亿"], ["创业", "3349.53", "43.39", "1.31%", "6631亿"],
];

export default function App() {
  return (
    <Frame>
      <Global />
      <MenuBar>
        <svg width="17" height="17" viewBox="0 0 17 17">
          <rect width="17" height="17" rx="1" fill="#d01818" />
          <path d="M9.500 1.500L4.500 8c-.8 1.200 0 2 1.200 1.500L9 8l-2 4.500C10 12 14 9 15.500 4.500L11 7.500c-1 .5-1.800 0-1.500-1zM2 10c0 3.500 3 5 7 4.500C6 14 4 12.500 2 10z" fill="#fff" />
        </svg>
        <AppTitle>通达信金融终端</AppTitle>
        <MenuGroup $gap={25}>
          {["行情", "市场", "资讯", "数据", "发现", "问小达", "财富圈", "投教", "交易"].map((m) => <button key={m}>{m}</button>)}
        </MenuGroup>
        <LoginNote><span>证券交易未登录</span><span>上证指数</span></LoginNote>
        <MenuRight>
          <MenuGroup $gap={16}>
            {["功能", "版面", "公式", "选项"].map((m) => <button key={m}>{m}</button>)}
          </MenuGroup>
          <MenuIcons>
            <svg width="14" height="14" viewBox="0 0 14 14" fill="none" stroke="#444" strokeWidth="1.200"><path d="M2.500 9A5 5 0 1 1 12 7.500M1.500 6.500v3h2M12.500 6.500C12.500 10 10 12 7 12.500M5 8c1 1.500 3 1.500 4 0" /></svg>
            <svg width="12" height="14" viewBox="0 0 12 14" fill="none" stroke="#444" strokeWidth="1.200"><rect x="2" y="1" width="8" height="12" rx="1" /><path d="M2 9.500h8M5 11.300h2" /></svg>
            <svg width="16" height="14" viewBox="0 0 16 14" fill="none" stroke="#444" strokeWidth="1.200"><path d="M3 3h12l-2 8.500H5M3 3l5 4.500L15 3M1 6h4M2 8.500h4" /></svg>
          </MenuIcons>
          <span>tdxPC1813141S</span>
          <Clock>18:00</Clock>
        </MenuRight>
        <Brand><BrandText>股海明灯</BrandText></Brand>
      </MenuBar>

      <Body>
        <Main>
          <Work>
            <Left>
              <PeriodBar>
                <PanelToggle aria-label="侧栏"><SplitIcon /></PanelToggle>
                <Periods>
                  {periods.map((p) => <Period key={p} $on={p === "日线"} $inset={p.endsWith("秒")}>{p}</Period>)}
                </Periods>
                <Tools>
                  {["直播", "复盘", "事件", "统计", "画线", "F10", "标记", "+自选", "返回"].map((t) => <Tool key={t}>{t}</Tool>)}
                </Tools>
              </PeriodBar>

              <Pane>
                <Plot>
                  <Info $h={18}>
                    <Ink $c={C.orange}>999999 上证指数(日线)</Ink>
                    <Disc />
                    <Ink $c={C.orange}>量友三王主图</Ink>
                    <Ink $c={C.red}>WEI21: 4124.32</Ink>
                    <Ink $c={C.magenta}>三日换手: 4.55</Ink>
                    <InfoTools>
                      <svg width="12" height="12" viewBox="0 0 12 12"><path d="M6 1l5 5-5 5-5-5z" fill="none" stroke="#666" /></svg>
                      <SplitIcon />
                    </InfoTools>
                  </Info>
                  <PriceChart />
                </Plot>
                <Axis>
                  <Canvas viewBox="1546 48 50 763" preserveAspectRatio="none">
                    <path d="M1546 207.500H1551" stroke={C.line} />
                    <text x="1563" y="212" fill={C.red}>4123</text>
                  </Canvas>
                </Axis>
              </Pane>

              <Pane $h={151}>
                <Plot>
                  <Info $h={17}>
                    <Disc />
                    <Ink $c={C.orange}>量友三王副图(5,10)</Ink>
                    <Ink $c={C.red}>VVOL: 707727168.00</Ink>
                    <Ink $c={C.blue}>VOLUME: 707727168.00</Ink>
                    <Ink $c={C.red}>高: 1.00</Ink>
                    <Ink $c="#00a000">低: 0.00</Ink>
                  </Info>
                  <VolumeChart />
                </Plot>
                <Axis $box>
                  <Canvas viewBox="1547 814 47 147" preserveAspectRatio="none" shapeRendering="crispEdges">
                    <path d="M1547 852.500h5M1547 879.500h5M1547 906.500h5M1547 932.500h5M1547 866.500h3M1547 893.500h3M1547 919.500h3" stroke={C.line} />
                    {["80000", "60000", "40000", "20000"].map((t, i) => <text key={t} x="1590" y={857 + i * 27} textAnchor="end" fill={C.red}>{t}</text>)}
                    <path d="M1547 947.500H1576.500V961" stroke={C.line} fill="none" />
                    <text x="1548" y="959" fill={C.red}>X1万</text>
                  </Canvas>
                </Axis>
              </Pane>

              <DateRow>
                <Canvas viewBox="3 963 1542 15" preserveAspectRatio="none" shapeRendering="crispEdges">
                  <path d="M502.500 963V978M969.500 963V978M1297.500 963V978M618.500 963v3M735.500 963v3M852.500 963v3M1051.500 963v3M1133.500 963v3M1215.500 963v3" stroke={C.line} />
                  <g fill={C.red}>
                    <text x="11" y="975">2025年</text>
                    <text x="503" y="975">1</text>
                    <text x="970" y="975">2</text>
                    <text x="1298" y="975">3</text>
                  </g>
                </Canvas>
                <DateCell>日线</DateCell>
              </DateRow>

              <TabRow $h={17}>
                {indicators.map((t) => <Tab key={t} $tight={/^[A-Z]{3}$/.test(t)} $c={hot.has(t) ? C.red : C.orange}>{t}</Tab>)}
                <Spacer />
                <Tab $w={43}>指标B</Tab>
                <Tab $w={42}>模 板</Tab>
                <Tab $w={25}>+</Tab>
                <Tab $w={25}>-</Tab>
              </TabRow>
              <TabRow $h={18}>
                <Switch><SwitchBox type="checkbox" /><SwitchPill>弹</SwitchPill></Switch>
                <Tab $w={42}>扩展︿</Tab>
                <Tab>关联报价</Tab>
                <Tab>资金流向</Tab>
                <Tab $c={C.red}>财富圈</Tab>
                <Tab $c={C.red}>盘面分析</Tab>
                <Tab $c={C.up}>涨跌贡献</Tab>
                <Tab $c={C.up}>互联互通</Tab>
                <Tab $c={C.red} $wide>市场资讯<NewMark /></Tab>
                <Tab $c={C.red}>板块资讯</Tab>
                <Spacer />
                <Tab $w={90}>普及版功能说明</Tab>
                <Tab $w={49} $c={C.red}>图文F10</Tab>
                <Tab $w={50} $c={C.red}>侧边栏 «</Tab>
              </TabRow>
            </Left>

            <Panel>
              <PanelHead>
                <i>G</i>
                <svg width="8" height="12" viewBox="0 0 8 12"><path d="M1 1.500h6" stroke={C.up} /><path d="M1 6h6" stroke="#bbb" /><path d="M0 11h7" stroke={C.lime} /></svg>
                <b>999999</b>上证指数
              </PanelHead>
              <Flow>
                <FlowRow $c={C.lime}><i style={{ width: 21 }} /><i style={{ width: 122 }} /><span>212.3亿</span></FlowRow>
                <FlowRow $c={C.up}><i style={{ width: 37 }} /><i style={{ width: 108 }} /><span>215.0亿</span></FlowRow>
              </Flow>
              <Stats>
                <tbody>
                  {turnover.map(([k, v]) => <tr key={k}><th scope="row">{k}</th><td><Ink $c={C.red}><b>{v}</b>亿</Ink></td></tr>)}
                </tbody>
              </Stats>
              <Stats>
                <tbody>
                  {stats.map(([k, v, c, u]) => <tr key={k}><th scope="row">{k}</th><td><Ink $c={c}><b>{v}</b>{u}</Ink></td></tr>)}
                </tbody>
              </Stats>
              <Breadth>
                <div>涨家数<Ink $c={C.up}><b>877</b></Ink></div>
                <div>跌家数<Ink $c={C.lime}><b>1390</b></Ink></div>
              </Breadth>
              <MiniTitle>上证指数</MiniTitle>
              <MiniChart />
              <MiniTabs>
                {["笔", "价", "细", "势", "联", "值", "主", "逆", "筹"].map((t) => <MiniTab key={t} $on={t === "势"}>{t}</MiniTab>)}
              </MiniTabs>
            </Panel>
          </Work>

          <StatusBar>
            <svg width="15" height="14" viewBox="0 0 15 14"><rect x="1" y="1" width="11" height="11" rx="1" fill="#fff4d0" stroke="#e89a10" strokeWidth="2" /><rect x="4" y="4" width="5" height="4" fill="#f8d060" stroke="#e89a10" /></svg>
            {quotes.map(([n, v, d, p, a]) => (
              <Quote key={n} $c={d.startsWith("-") ? "#008a00" : C.red}>
                <QuoteText $dark>{n}</QuoteText>
                <QuoteText>{v}</QuoteText>
                <QuoteText $end>{d}</QuoteText>
                <QuoteText $indent>{p}</QuoteText>
                <QuoteText $indent $dark>{a}</QuoteText>
              </Quote>
            ))}
            <Server>
              <Blocks>
                <svg width="99" height="20" viewBox="0 0 99 20" shapeRendering="crispEdges">
                  {[0, 50].map((o) => (
                    <g key={o}>
                      <rect x={o} y="3" width="47" height="7" fill="#fff" />
                      <path d={`M${o} 13h47M${o} 17h47`} stroke={C.down} strokeWidth="2" strokeDasharray="7 1" />
                    </g>
                  ))}
                  <path d="M16 4h6v5h-6zM66 4h7v5h-7z" fill="#f00000" />
                  <path d="M23 4h7v5h-7zM75 4h9v5h-9z" fill={C.down} />
                </svg>
              </Blocks>
              高级行情_深圳双线3
            </Server>
            <StatusRight>
              7x24
              <Search>
                <svg width="11" height="11" viewBox="0 0 11 11" fill="none" stroke="#ddd" strokeWidth="1.200"><circle cx="4.500" cy="4.500" r="3.500" /><path d="M7 7l3.500 3.500" /></svg>
                <input aria-label="搜索" />
              </Search>
              <svg width="14" height="14" viewBox="0 0 14 14"><rect x="1" y="1" width="12" height="12" rx="3" fill="#e0d020" stroke="#8a8000" /><path d="M7 3.500L4.500 6.500h2v2h1v-2h2zM4 10.500h6" fill="#6a6000" stroke="#6a6000" strokeWidth=".6" /></svg>
              <svg width="14" height="14" viewBox="0 0 14 14"><path d="M3 1h9v8l-3-2-4 1-2-3z" fill="#777" /><path d="M1 13h5M3.500 13V9l3-1M9 7l3 3" stroke="#777" strokeWidth="1.500" fill="none" /></svg>
              <svg width="9" height="14" viewBox="0 0 9 14"><path d="M4.500 1L8 4.500H1z" fill="red" /><path d="M4.500 5L8 9H1z" fill="#f0e000" /><path d="M4.500 9.500L8 13H1z" fill="green" /></svg>
              <svg width="7" height="14" viewBox="0 0 7 14"><path d="M2 2h3v5H2zM3 8h1v4H3z" fill="#777" /></svg>
            </StatusRight>
          </StatusBar>
        </Main>

        <Strip>
          {strip.map((s) => s.rule ? <StripRule key={s.id} /> : (
            <StripItem key={s.id} $on={s.on} $small={s.small} aria-label={s.id}>{s.art || s.text}</StripItem>
          ))}
        </Strip>
      </Body>
    </Frame>
  );
}
